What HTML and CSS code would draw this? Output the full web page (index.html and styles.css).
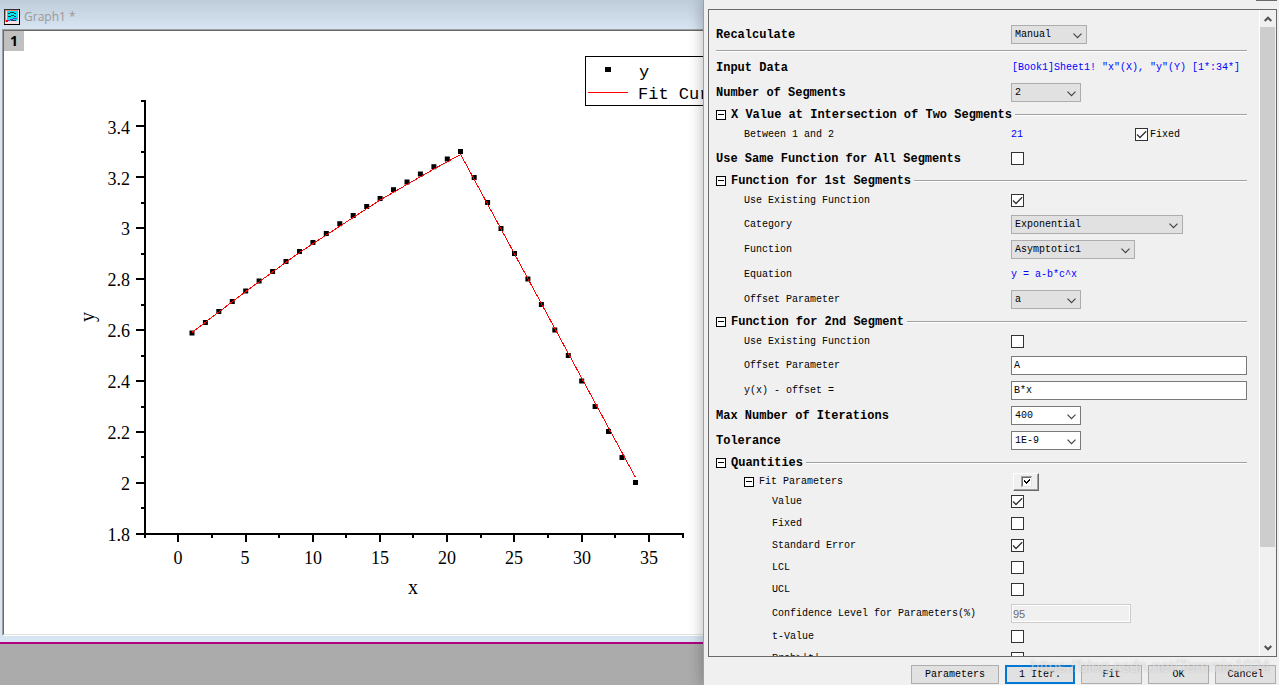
FILE: index.html
```html
<!DOCTYPE html>
<html lang="en">
<head>
<meta charset="utf-8">
<title>Graph1</title>
<link rel="stylesheet" href="styles.css">
</head>
<body>
<div class="desktop">
  <main class="workspace">
    <section class="graph-window">
      <header class="titlebar">
        <svg class="titlebar-icon" width="16" height="16" viewBox="0 0 16 16" shape-rendering="crispEdges" aria-hidden="true">
          <rect width="16" height="16" fill="#000"/>
          <rect x="0" y="0" width="15" height="15" fill="#333"/>
          <rect x="1" y="1" width="14" height="14" fill="#fbe3e3"/>
          <path d="M1 1.500h13M1.500 1v12M13.500 1v10" fill="none" stroke="#f08078"/>
          <rect x="3" y="2" width="10" height="10" fill="#00e5f0"/>
          <path d="M4 4.500h2M6 3.500h4M10 4.500h2M4 7.500h3M7 6.500h3M10 7.500h2" fill="none" stroke="#064848"/>
          <path d="M3 11.500h3M6 10.500h3M9 9.500h4" fill="none" stroke="#7030d0"/>
          <path d="M7 11.500h5" stroke="#1a4060"/>
          <rect x="2" y="11" width="2" height="2" fill="#f00"/>
        </svg>
        <h1 class="titlebar-text">Graph1 *</h1>
      </header>
      <div class="graph-page">
        <button class="layer-tab" type="button">1</button>
        <svg class="chart" viewBox="4 31 699 603" role="img" aria-label="y against x with fitted curve">
          <defs>
            <marker id="dot" markerUnits="userSpaceOnUse" markerWidth="6" markerHeight="6" refX="3" refY="3">
              <rect x="0.5" y="0.5" width="5" height="5" fill="#000"/>
            </marker>
          </defs>
          <g class="axis">
            <path d="M145 100V535M144 534H684"/>
            <path d="M136 126h8M136 177h8M136 228h8M136 279h8M136 330h8M136 381h8M136 432h8M136 483h8M136 534h8"/>
            <path d="M141 101h4M141 152h4M141 203h4M141 254h4M141 305h4M141 356h4M141 407h4M141 457h4M141 508h4"/>
            <path d="M178 535v7M246 535v7M313 535v7M380 535v7M447 535v7M514 535v7M582 535v7M649 535v7"/>
            <path d="M145 535v3M212 535v3M279 535v3M346 535v3M413 535v3M481 535v3M548 535v3M615 535v3M683 535v3"/>
          </g>
          <g class="tick-text tick-text-y">
            <text x="130" y="134">3.4</text><text x="130" y="185">3.2</text><text x="130" y="235">3</text>
            <text x="130" y="286">2.8</text><text x="130" y="337">2.6</text><text x="130" y="388">2.4</text>
            <text x="130" y="439">2.2</text><text x="130" y="490">2</text><text x="130" y="541">1.8</text>
          </g>
          <g class="tick-text tick-text-x">
            <text x="178" y="564">0</text><text x="245" y="564">5</text><text x="313" y="564">10</text>
            <text x="380" y="564">15</text><text x="447" y="564">20</text><text x="514" y="564">25</text>
            <text x="582" y="564">30</text><text x="649" y="564">35</text>
          </g>
          <text class="axis-title" x="413" y="594">x</text>
          <text class="axis-title" transform="translate(94 317) rotate(-90)">y</text>
          <polyline class="points" points="192,333 205.4,322.5 218.8,311.5 232.3,301.5 245.7,291 259.1,281 272.6,271.5 286,261.5 299.5,251.5 312.9,242.5 326.3,233.5 339.8,223.7 353.2,215.5 366.7,206.5 380.1,198.5 393.5,189.7 407,182 420.4,174 433.9,166.7 447.3,159 460.5,151.5 474.2,177.5 487.6,202.5 501,228.5 514.5,253.5 527.9,279 541.4,304.5 554.8,330 568.3,355.5 581.7,381 595.1,406.5 608.5,431.5 622,457.5 635.5,482.5"/>
          <polyline class="fit" points="192,332.5 218.8,312 245.7,291.5 272.6,272 299.5,252.5 326.3,235 353.2,217.5 380.1,200 407,184.5 433.9,169 460.7,154.5 635.5,477.5"/>
          <rect class="legend-box" x="585.5" y="56.5" width="170" height="49"/>
          <rect x="605" y="67" width="6" height="5"/>
          <path class="fit" d="M588 92.5h40"/>
          <text class="legend-text" x="639" y="77">y</text>
          <text class="legend-text" x="638" y="99">Fit Curve</text>
        </svg>
      </div>
    </section>
  </main>

  <form class="dialog">
    <div class="panel">
      <div class="settings">
        <div class="row strong">
          <label for="recalc">Recalculate</label>
          <div class="field"><select id="recalc" class="combo combo-s76"><option>Manual</option></select></div>
        </div>
        <hr class="rule">
        <div class="row strong">
          <span>Input Data</span>
          <output class="value value-inset">[Book1]Sheet1! "x"(X), "y"(Y) [1*:34*]</output>
        </div>
        <div class="row strong">
          <label for="segments">Number of Segments</label>
          <div class="field"><select id="segments" class="combo"><option>2</option></select></div>
        </div>

        <div class="group">
          <button class="toggle" type="button" aria-label="Collapse"></button>
          <h2 class="group-title">X Value at Intersection of Two Segments</h2><span class="group-line"></span>
        </div>
        <div class="row row-check indent">
          <span>Between 1 and 2</span>
          <div class="field">
            <output class="value value-wide">21</output>
            <label class="check-label"><input class="check" type="checkbox" checked>Fixed</label>
          </div>
        </div>
        <div class="row strong">
          <label for="same">Use Same Function for All Segments</label>
          <div class="field"><input id="same" class="check" type="checkbox"></div>
        </div>

        <div class="group">
          <button class="toggle" type="button" aria-label="Collapse"></button>
          <h2 class="group-title">Function for 1st Segments</h2><span class="group-line"></span>
        </div>
        <div class="row row-check indent">
          <label for="existing1">Use Existing Function</label>
          <div class="field"><input id="existing1" class="check" type="checkbox" checked></div>
        </div>
        <div class="row indent">
          <label for="category">Category</label>
          <div class="field"><select id="category" class="combo combo-s172"><option>Exponential</option></select></div>
        </div>
        <div class="row indent">
          <label for="function">Function</label>
          <div class="field"><select id="function" class="combo combo-s124"><option>Asymptotic1</option></select></div>
        </div>
        <div class="row indent">
          <span>Equation</span>
          <output class="value">y = a-b*c^x</output>
        </div>
        <div class="row indent">
          <label for="offset1">Offset Parameter</label>
          <div class="field"><select id="offset1" class="combo"><option>a</option></select></div>
        </div>

        <div class="group">
          <button class="toggle" type="button" aria-label="Collapse"></button>
          <h2 class="group-title">Function for 2nd Segment</h2><span class="group-line"></span>
        </div>
        <div class="row row-check indent">
          <label for="existing2">Use Existing Function</label>
          <div class="field"><input id="existing2" class="check" type="checkbox"></div>
        </div>
        <div class="row indent">
          <label for="offset2">Offset Parameter</label>
          <div class="field"><input id="offset2" class="text" type="text" value="A"></div>
        </div>
        <div class="row indent">
          <label for="yx">y(x) - offset =</label>
          <div class="field"><input id="yx" class="text" type="text" value="B*x"></div>
        </div>
        <div class="row strong">
          <label for="iterations">Max Number of Iterations</label>
          <div class="field"><select id="iterations" class="combo combo-edit"><option>400</option></select></div>
        </div>
        <div class="row strong">
          <label for="tolerance">Tolerance</label>
          <div class="field"><select id="tolerance" class="combo combo-edit"><option>1E-9</option></select></div>
        </div>

        <div class="group">
          <button class="toggle" type="button" aria-label="Collapse"></button>
          <h2 class="group-title">Quantities</h2><span class="group-line"></span>
        </div>
        <div class="row row-sub indent">
          <div class="subgroup"><button class="toggle" type="button" aria-label="Collapse"></button><span>Fit Parameters</span></div>
          <div class="field">
            <button class="check-all" type="button" aria-label="Check all">
              <svg width="11" height="11" viewBox="0 0 11 11" shape-rendering="crispEdges" aria-hidden="true">
                <rect width="11" height="11" fill="#fff"/>
                <path d="M0 .5h11M.5 0v11" stroke="#a0a0a0"/>
                <path d="M1 1.500h9M1.500 1v9" stroke="#696969"/>
                <path d="M1 10.500h10M10.500 1v10" stroke="#e3e3e3"/>
                <path d="M3 4h1v1h1v1h1v-1h1v-1h1v-1h1v2h-1v1h-1v1h-1v1h-1v-1h-1v-1h-1z" fill="#000"/>
              </svg>
            </button>
          </div>
        </div>
        <div class="row row-check indent2">
          <label for="q-value">Value</label>
          <div class="field"><input id="q-value" class="check" type="checkbox" checked></div>
        </div>
        <div class="row row-check indent2">
          <label for="q-fixed">Fixed</label>
          <div class="field"><input id="q-fixed" class="check" type="checkbox"></div>
        </div>
        <div class="row row-check indent2">
          <label for="q-se">Standard Error</label>
          <div class="field"><input id="q-se" class="check" type="checkbox" checked></div>
        </div>
        <div class="row row-check indent2">
          <label for="q-lcl">LCL</label>
          <div class="field"><input id="q-lcl" class="check" type="checkbox"></div>
        </div>
        <div class="row row-check indent2">
          <label for="q-ucl">UCL</label>
          <div class="field"><input id="q-ucl" class="check" type="checkbox"></div>
        </div>
        <div class="row indent2">
          <label for="q-conf">Confidence Level for Parameters(%)</label>
          <div class="field"><input id="q-conf" class="text text-off" type="text" value="95" disabled></div>
        </div>
        <div class="row row-check indent2">
          <label for="q-t">t-Value</label>
          <div class="field"><input id="q-t" class="check" type="checkbox"></div>
        </div>
        <div class="row row-check indent2">
          <label for="q-prob">Prob&gt;|t|</label>
          <div class="field"><input id="q-prob" class="check" type="checkbox"></div>
        </div>
      </div>
      <div class="scrollbar">
        <button class="scroll-btn" type="button" aria-label="Scroll up">
          <svg width="8" height="6" viewBox="0 0 8 6" aria-hidden="true"><path d="M.7 5L4 1.700 7.300 5" fill="none" stroke="#505050" stroke-width="2"/></svg>
        </button>
        <div class="scroll-track"><div class="scroll-thumb"></div></div>
        <button class="scroll-btn" type="button" aria-label="Scroll down">
          <svg width="8" height="6" viewBox="0 0 8 6" aria-hidden="true"><path d="M.7 1L4 4.300 7.300 1" fill="none" stroke="#505050" stroke-width="2"/></svg>
        </button>
      </div>
    </div>
    <footer class="actions">
      <button class="btn btn-wide" type="button">Parameters</button>
      <button class="btn btn-default" type="button">1 Iter.</button>
      <button class="btn" type="submit">Fit</button>
      <button class="btn" type="button">OK</button>
      <button class="btn" type="button">Cancel</button>
    </footer>
    <span class="corner"></span>
    <span class="watermark">https://blog.csdn.net/Temmie1024</span>
  </form>
</div>
</body>
</html>
```
FILE: styles.css
```css
* { box-sizing: border-box; }

body {
  margin: 0;
  font: 10px/12px "Liberation Mono", monospace;
  color: #000;
}

button, input, select { font: inherit; color: inherit; margin: 0; }

.desktop {
  display: grid;
  grid-template-columns: 703fr 576fr;
  grid-template-rows: 100vh;
  background: #ababab;
  overflow: hidden;
}

/* graph window */
.workspace { min-width: 0; overflow: hidden; }

.graph-window {
  background: #d7e4f2;
  padding: 0 0 6px 2px;
  border-bottom: 2px solid #b0007f;
}

.titlebar {
  display: flex;
  align-items: center;
  gap: 4px;
  height: 29px;
  padding: 5px 0 0 4px;
  margin-left: -2px;
  background: linear-gradient(#bfccda, #d7e4f2);
}

.titlebar-text {
  margin: 0;
  font: 12px/18px "Open Sans", sans-serif;
  color: #999;
}

.graph-page {
  position: relative;
  background: #fff;
  border: solid #a0a0a0;
  border-width: 1px 0 0 1px;
  border-bottom: 1px solid #fff;
}

.layer-tab {
  position: absolute;
  top: 1px;
  left: 1px;
  width: 20px;
  height: 20px;
  padding: 0;
  border: 0;
  background: #c0c0c0;
  font: bold 14px/20px "Noto Sans", sans-serif;
}

.chart {
  display: block;
  width: 100%;
  height: auto;
  border: solid #696969;
  border-width: 1px 0 0 1px;
  border-bottom: 1px solid #e3e3e3;
}

.axis { fill: none; stroke: #000; stroke-width: 2; shape-rendering: crispEdges; }
.tick-text { font: 18px "Liberation Serif", serif; }
.tick-text-y { text-anchor: end; }
.tick-text-x { text-anchor: middle; }
.axis-title { font: 20px "Liberation Serif", serif; text-anchor: middle; }
.points {
  fill: none;
  stroke: none;
  marker: url(#dot);
  shape-rendering: crispEdges;
}
.fit { fill: none; stroke: #f00; stroke-width: 1; shape-rendering: crispEdges; }
.legend-box { fill: #fff; stroke: #000; }
.legend-text { font: 17px "Liberation Mono", monospace; }

/* dialog */
.dialog {
  position: relative;
  display: flex;
  flex-direction: column;
  min-width: 0;
  height: 100vh;
  padding: 9px 2px 0 4px;
  background: #f0f0f0;
  border-left: 1px solid #a0a0a0;
  box-shadow: 0 0 14px rgba(0, 0, 0, 0.3);
}

.panel {
  display: flex;
  flex: 1;
  min-height: 0;
  border: 1px solid #696969;
}

.settings {
  flex: 1;
  min-width: 0;
  overflow: hidden;
  padding: 12px 12px 0 7px;
}

.row {
  display: grid;
  grid-template-columns: 5fr 4fr;
  align-items: center;
  height: 25px;
  white-space: nowrap;
}
.row-check { height: 22px; }
.row-sub { height: 19px; }
.strong > :first-child { font-size: 12px; font-weight: bold; }
.indent > :first-child { padding-left: 28px; }
.indent2 > :first-child { padding-left: 56px; }

.field { display: flex; align-items: center; min-width: 0; }
.row-check .field { padding-bottom: 1px; }
.value { color: #00f; }
.value-inset { padding-left: 1px; }
.value-wide { flex: 0 0 124px; }

.rule {
  height: 2px;
  margin: 3px 0;
  border: 0;
  border-top: 1px solid #a0a0a0;
  background: #fff;
}

.group { display: flex; align-items: center; height: 19px; white-space: nowrap; }
.group-title { margin: 0 3px 0 5px; font-size: 12px; line-height: 14px; }
.group-line { flex: 1; height: 2px; border-top: 1px solid #a0a0a0; background: #fff; }
.subgroup { display: flex; align-items: center; gap: 5px; }

.toggle {
  flex: none;
  width: 10px;
  height: 10px;
  padding: 0;
  border: 1px solid #000;
  background: linear-gradient(#000, #000) center / 6px 1px no-repeat #fff;
}

.combo {
  appearance: none;
  width: 70px;
  height: 19px;
  padding: 0 16px 0 3px;
  border: 1px solid #adadad;
  border-radius: 0;
  background: #e1e1e1 url("data:image/svg+xml,%3Csvg xmlns='http://www.w3.org/2000/svg' width='9' height='6'%3E%3Cpath d='M.5 .7L4.500 4.700 8.500 .7' fill='none' stroke='%23444' stroke-width='1.200'/%3E%3C/svg%3E") right 4px top 7px no-repeat;
}
.combo-s76 { width: 76px; }
.combo-s124 { width: 124px; }
.combo-s172 { width: 172px; }
.combo-edit { border-color: #7a7a7a; background-color: #fff; }

.text {
  width: 100%;
  height: 19px;
  padding: 0 2px;
  border: 1px solid #7a7a7a;
  background: #fff;
}
.text-off {
  width: 120px;
  padding: 0 1px;
  border-color: #ccc;
  background: #f0f0f0;
  box-shadow: inset 0 0 0 1px #fff;
  font-family: "Liberation Sans", sans-serif;
  font-size: 11px;
  color: #6d6d6d;
}

.check {
  appearance: none;
  flex: none;
  width: 13px;
  height: 13px;
  border: 1px solid #333;
  background: #fff;
}
.check:checked {
  background: #fff url("data:image/svg+xml,%3Csvg xmlns='http://www.w3.org/2000/svg' width='11' height='11'%3E%3Cpath d='M1 5.500L4 8.500 10.200 2.300' fill='none' stroke='%23333' stroke-width='1.300'/%3E%3C/svg%3E") center no-repeat;
}
.check-label { display: flex; align-items: center; gap: 2px; }

.check-all {
  display: flex;
  align-items: center;
  justify-content: center;
  width: 26px;
  height: 18px;
  margin-left: 2px;
  padding: 0;
  border: 1px solid;
  border-color: #fff #696969 #696969 #fff;
  background: #f0f0f0;
  box-shadow: inset -1px -1px #a0a0a0;
}

/* scrollbar */
.scrollbar {
  display: flex;
  flex-direction: column;
  flex: 0 0 17px;
  border-left: 1px solid #fff;
}
.scroll-btn {
  display: flex;
  align-items: center;
  justify-content: center;
  height: 17px;
  padding: 0;
  border: 0;
  background: #f0f0f0;
}
.scroll-track { flex: 1; }
.scroll-thumb { height: 85%; background: #cdcdcd; margin-right: 1px; }

/* footer */
.actions {
  display: flex;
  justify-content: flex-end;
  gap: 6px;
  padding: 8px 1px 1px 0;
}
.btn {
  width: 61px;
  height: 19px;
  padding: 0;
  border: 1px solid #adadad;
  background: #e1e1e1;
}
.btn-wide { width: 88px; }
.btn-default { width: 70px; border: 2px solid #0078d7; }

.corner {
  position: absolute;
  top: 0;
  right: 2px;
  width: 21px;
  height: 1px;
  background: #696969;
}

.watermark {
  position: absolute;
  right: 9px;
  bottom: 8px;
  font: 16px/20px "Liberation Sans", sans-serif;
  color: rgba(255, 255, 255, 0.45);
  text-shadow: 0 0 2px rgba(120, 120, 120, 0.4);
  pointer-events: none;
}
```
